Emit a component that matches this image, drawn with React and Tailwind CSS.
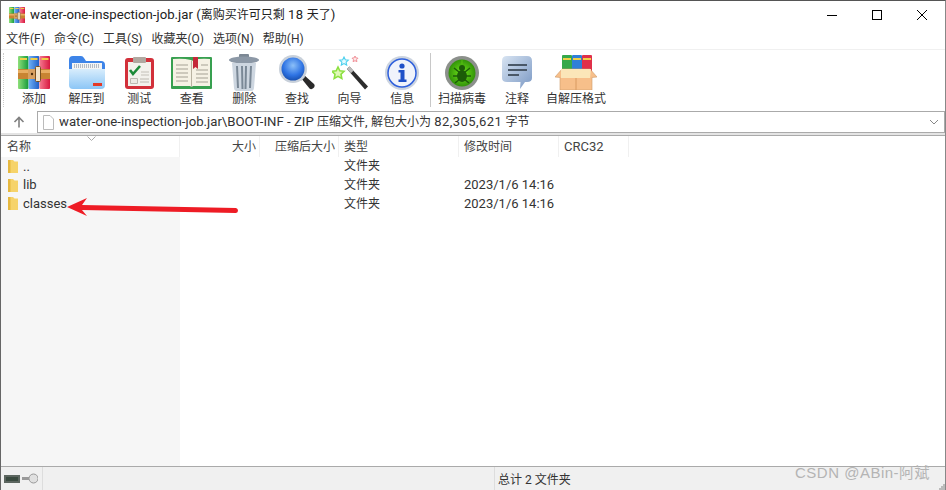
const font = 'font-["Roboto","Noto_Sans_CJK_SC",sans-serif]'

function Cn({ children }) {
  return <span className="text-xs">{children}</span>
}

function Num({ children }) {
  return <span className="text-[13px] tracking-[.45px]">{children}</span>
}

function RarIcon({ size = 32, id = 'a' }) {
  return (
    <svg width={size} height={size * 33 / 32} viewBox="0 0 32 33">
      <defs>
        <linearGradient id={`rg${id}`} x1="0" x2="1" y1="0" y2="0"><stop offset="0" stopColor="#8fe07a" /><stop offset="1" stopColor="#159a3c" /></linearGradient>
        <linearGradient id={`rb${id}`} x1="0" x2="1" y1="0" y2="0"><stop offset="0" stopColor="#6fb0f5" /><stop offset="1" stopColor="#1f5fc8" /></linearGradient>
        <linearGradient id={`rr${id}`} x1="0" x2="1" y1="0" y2="0"><stop offset="0" stopColor="#f57a90" /><stop offset="1" stopColor="#d81840" /></linearGradient>
      </defs>
      <rect x="0" y="0" width="10.500" height="33" rx="1" fill={`url(#rg${id})`} />
      <rect x="10.700" y="0" width="10.500" height="33" rx="1" fill={`url(#rb${id})`} />
      <rect x="21.400" y="0" width="10.600" height="33" rx="1" fill={`url(#rr${id})`} />
      <path d="M2 2h7v2H2zM12.500 2h7v2h-7zM23.500 2h7v2h-7z" fill="#f0d048" />
      <rect x="0" y="13" width="32" height="10" fill="#c88432" />
      <rect x="0" y="14" width="32" height="3" fill="#e8ae62" />
      <rect x="10" y="13" width="11" height="10" fill="#d8a060" />
      <rect x="17.500" y="10.500" width="5" height="15" rx="1" fill="#f3e3c8" stroke="#7a5020" />
      <circle cx="14" cy="18" r="1.200" fill="#4a2c0c" />
    </svg>
  )
}

function ExtractIcon() {
  return (
    <svg width="36" height="33" viewBox="0 0 36 33">
      <defs>
        <linearGradient id="ex" x1="0" x2="0" y1="0" y2="1"><stop offset="0" stopColor="#d8edfc" /><stop offset="1" stopColor="#8cc6f6" /></linearGradient>
      </defs>
      <path d="M0 4q0-4 4-4h8q2 0 3 2l2 3h15q4 0 4 4v6H0z" fill="#3d84e8" />
      <rect x="3" y="7" width="30" height="10" fill="#f4f4f4" />
      <path d="M5 10h26" stroke="#b4bcc6" strokeWidth="4" strokeDasharray="1 1" />
      <path d="M0 13h36v16q0 4-4 4H4q-4 0-4-4z" fill="url(#ex)" />
      <rect x="24" y="27" width="9" height="3" fill="#e53a26" />
    </svg>
  )
}

function TestIcon() {
  return (
    <svg width="29" height="32" viewBox="0 0 29 32">
      <rect x="0" y="1" width="29" height="31" rx="3" fill="#d2303a" />
      <rect x="3" y="5" width="23" height="24" fill="#f3f1ec" />
      <rect x="8" y="0" width="13" height="6" rx="1" fill="#b0a8a0" />
      <path d="M5 13l3 4 7-8" fill="none" stroke="#1c8a38" strokeWidth="2.600" />
      <path d="M16 15h8M16 18h8" stroke="#c4c0b8" />
      <path d="M5.500 21.500h7v5h-7zM15 22h9M15 25h9" fill="#eceae4" stroke="#bcb8b0" />
    </svg>
  )
}

function BookIcon() {
  return (
    <svg width="41" height="32" viewBox="0 0 41 32">
      <rect x="0" y="0" width="41" height="32" rx="1" fill="#38a050" />
      <path d="M2 2q10-1 18 1 1 .5 1 1 1-.5 1-1 8-2 17-1v27H22l-1.500 1-1.500-1H2z" fill="#f5f1e4" />
      <path d="M20.500 4v26" stroke="#b8b2a0" />
      <path d="M5 8h12M5 12h12M5 16h12M5 20h12M5 24h12M25 13h12M25 17h12M25 21h12M25 25h12M30 8h7" stroke="#c0bcae" strokeWidth="1.400" />
      <path d="M22 0h5v12l-2.500-2-2.500 2z" fill="#c4283a" />
    </svg>
  )
}

function TrashIcon() {
  return (
    <svg width="30" height="37" viewBox="0 0 30 37">
      <rect x="10" y="0" width="10" height="4" rx="1" fill="#7c8894" />
      <ellipse cx="15" cy="6" rx="15" ry="3.500" fill="#8c98a6" />
      <path d="M3 9h24l-2 25q-.2 3-3 3H8q-2.800 0-3-3z" fill="#cdd6e0" />
      <path d="M8 12l1 22M13 12l.5 23M17 12l-.5 23M22 12l-1 22" stroke="#7a8896" strokeWidth="2" />
    </svg>
  )
}

function SearchIcon() {
  return (
    <svg width="36" height="35" viewBox="0 0 36 35">
      <defs>
        <radialGradient id="sg" cx=".5" cy=".35" r=".7"><stop offset="0" stopColor="#8cc0f8" /><stop offset=".6" stopColor="#2f74e4" /><stop offset="1" stopColor="#144aa8" /></radialGradient>
      </defs>
      <path d="M22 23l3-3 10 9q1.500 2-.5 4t-4 .5z" fill="#2a2a2a" />
      <path d="M20 24l4-4 2 2-4 4z" fill="#a8aeb4" />
      <circle cx="14" cy="14" r="14" fill="#c8d0da" />
      <circle cx="14" cy="14" r="11.500" fill="url(#sg)" />
    </svg>
  )
}

function WizardIcon() {
  return (
    <svg width="36" height="34" viewBox="0 0 36 34">
      <path d="M6 11l1.800 3.800 4.200.5-3 2.900.8 4.300-3.800-2.100-3.800 2.100.8-4.300-3-2.900 4.200-.5z" fill="#e0f8b8" stroke="#8ce040" strokeWidth="1.600" />
      <path d="M12 1l1.300 2.700 3 .4-2.200 2 .6 3-2.700-1.500L9.300 9.100l.6-3-2.200-2 3-.4z" fill="#e4fbff" stroke="#4cd0ee" strokeWidth="1.100" />
      <path d="M23 0l.9 1.900 2.100.3-1.500 1.500.4 2-1.900-1-1.900 1 .4-2L20 2.200l2.100-.3z" fill="#ffe8e8" stroke="#f09098" strokeWidth="1" />
      <path d="M15 13l2.500-2.500L36 30.500 33 33.500z" fill="#2c2c2c" />
      <path d="M15 13l2.500-2.500 4 4.300-2.600 2.500z" fill="#bcbcbc" />
    </svg>
  )
}

function InfoIcon() {
  return (
    <svg width="34" height="34" viewBox="0 0 34 34">
      <circle cx="17" cy="17" r="17" fill="#ccd4e0" />
      <circle cx="17" cy="17" r="14" fill="#f0f3fb" stroke="#2f60dc" strokeWidth="1.500" />
      <circle cx="17" cy="10" r="2.600" fill="#1f50c8" />
      <path d="M13.500 14h6v9.500h2V26h-8v-2.500h2V16.500h-2z" fill="#1f50c8" />
    </svg>
  )
}

function VirusIcon() {
  return (
    <svg width="34" height="34" viewBox="0 0 34 34">
      <defs>
        <radialGradient id="vg" cx=".5" cy=".5" r=".55"><stop offset="0" stopColor="#70e818" /><stop offset="1" stopColor="#2c8a08" /></radialGradient>
      </defs>
      <circle cx="17" cy="17" r="17" fill="#8c908c" />
      <circle cx="17" cy="17" r="13.500" fill="url(#vg)" />
      <ellipse cx="17" cy="20" rx="5" ry="6" fill="#1c5c08" />
      <circle cx="17" cy="12" r="3" fill="#1c5c08" />
      <path d="M9 12l5 4M25 12l-5 4M8 20h6M26 20h-6M10 27l5-4M24 27l-5-4" stroke="#1c5c08" strokeWidth="1.500" />
      <path d="M17 4v4" stroke="#58c010" />
    </svg>
  )
}

function CommentIcon() {
  return (
    <svg width="30" height="33" viewBox="0 0 30 33">
      <defs>
        <linearGradient id="cm" x1="0" x2="1" y1="0" y2="1"><stop offset="0" stopColor="#d8e4f2" /><stop offset="1" stopColor="#7a98c4" /></linearGradient>
      </defs>
      <path d="M5 0h20q5 0 5 5v17q0 4-5 4h-2l-5 7 .5-7H5q-5 0-5-4V5q0-5 5-5z" fill="url(#cm)" />
      <path d="M6 9h19M6 14h19M6 19h11" stroke="#4a5868" strokeWidth="2" />
    </svg>
  )
}

function SfxIcon() {
  return (
    <svg width="42" height="35" viewBox="0 0 42 35">
      <rect x="7" y="0" width="10" height="18" rx="1" fill="#35a84a" />
      <rect x="17" y="0" width="10" height="18" rx="1" fill="#2f7fd8" />
      <rect x="27" y="0" width="10" height="18" rx="1" fill="#e0304a" />
      <path d="M8 3h8v2H8zM18 3h8v2h-8zM28 3h8v2h-8z" fill="#f0d048" />
      <path d="M7 14h28l7 8-5 .5v12.500H5V22.500L0 22z" fill="#f7bf8a" stroke="#cf9a68" strokeWidth=".6" />
      <path d="M6 14h30l-1 9H6z" fill="#fbe6b8" />
      <path d="M21 23v12" stroke="#d99a60" />
    </svg>
  )
}

const tools = [
  { label: '添加', w: 'w-[52.6px]', icon: <RarIcon /> },
  { label: '解压到', w: 'w-[52.6px]', icon: <ExtractIcon /> },
  { label: '测试', w: 'w-[52.6px]', icon: <TestIcon /> },
  { label: '查看', w: 'w-[52.6px]', icon: <BookIcon /> },
  { label: '删除', w: 'w-[52.6px]', icon: <TrashIcon /> },
  { label: '查找', w: 'w-[52.6px]', icon: <SearchIcon /> },
  { label: '向导', w: 'w-[52.6px]', icon: <WizardIcon /> },
  { label: '信息', w: 'w-[52.6px]', icon: <InfoIcon /> },
]

const tools2 = [
  { label: '扫描病毒', w: 'w-[54px]', icon: <VirusIcon /> },
  { label: '注释', w: 'w-[56px]', icon: <CommentIcon /> },
  { label: '自解压格式', w: 'w-[62px]', icon: <SfxIcon /> },
]

const menus = ['文件(F)', '命令(C)', '工具(S)', '收藏夹(O)', '选项(N)', '帮助(H)']

const rows = [
  { name: '..', type: '文件夹', time: '' },
  { name: 'lib', type: '文件夹', time: '2023/1/6 14:16' },
  { name: 'classes', type: '文件夹', time: '2023/1/6 14:16' },
]

function Tool({ tool }) {
  return (
    <div className={`${tool.w} flex flex-col items-center shrink-0`}>
      <div className="h-[37px] mt-px flex items-center justify-center">{tool.icon}</div>
      <div className="text-xs leading-[17px] whitespace-nowrap text-[#333]">{tool.label}</div>
    </div>
  )
}

function Folder() {
  return (
    <svg width="10" height="13" viewBox="0 0 10 13" className="shrink-0">
      <path d="M0 0h5l1.500 1.500H10V13H0z" fill="#f6d36a" />
      <path d="M0 0h2.500v13H0z" fill="#e6b83e" />
    </svg>
  )
}

export default function App() {
  return (
    <div className={`relative w-[946px] h-[490px] overflow-hidden bg-white flex flex-col border-t border-t-[#555] border-r border-r-[#888] border-l border-l-[#666] text-[#333] text-[13px] ${font}`}>
      {/* 标题栏 */}
      <div className="h-[28px] flex items-center shrink-0 pl-2">
        <RarIcon size={16} id="t" />
        <span className="ml-[5px] text-[13.2px] text-[#222] whitespace-nowrap">water-one-inspection-job.jar (<Cn>离购买许可只剩</Cn> <Num>18</Num> <Cn>天了</Cn>)</span>
        <div className="ml-auto flex items-center text-black">
          <svg width="12" height="12" viewBox="0 0 12 12" className="mr-[33px]"><path d="M1 6.500h10" stroke="#000" /></svg>
          <svg width="12" height="12" viewBox="0 0 12 12" className="mr-[33px]"><rect x="1.500" y="1.500" width="9" height="9" fill="none" stroke="#000" /></svg>
          <svg width="12" height="12" viewBox="0 0 12 12" className="mr-[17px]"><path d="M1 1l10 10M11 1L1 11" stroke="#000" /></svg>
        </div>
      </div>

      {/* 菜单 */}
      <div className="h-[21px] flex items-center shrink-0 pl-[5px] gap-[9px] text-xs text-[#333] border-b border-[#f0f0f0]">
        {menus.map((m) => <span key={m} className="whitespace-nowrap">{m}</span>)}
      </div>

      {/* 工具栏 */}
      <div className="h-[61px] flex items-start shrink-0 pt-[3px]">
        <div className="w-px h-[54px] ml-[2px] mr-[3.700px] shrink-0 border-l border-dotted border-[#ccc]" />
        {tools.map((t) => <Tool key={t.label} tool={t} />)}
        <div className="w-px h-[54px] bg-[#c8c8c8] ml-[2px] mr-[3.500px] shrink-0" />
        {tools2.map((t) => <Tool key={t.label} tool={t} />)}
      </div>

      {/* 地址栏 */}
      <div className="h-[22px] flex items-center shrink-0">
        <div className="w-[36px] flex justify-center">
          <svg width="12" height="12" viewBox="0 0 12 12"><path d="M6 11.500V1.500M1.500 6l4.500-4.500L10.500 6" fill="none" stroke="#808080" strokeWidth="1.600" /></svg>
        </div>
        <div className="flex-1 h-[22px] border border-[#aaa] flex items-center pl-[5px] pr-[5px] bg-white">
          <svg width="11" height="15" viewBox="0 0 11 15" className="shrink-0"><path d="M.5.500h6.500l3.500 3.500v10.500H.5z" fill="#fff" stroke="#bbb" /></svg>
          <span className="ml-[5px] text-[13.2px] text-[#333] whitespace-nowrap">water-one-inspection-job.jar\BOOT-INF - ZIP <Cn>压缩文件</Cn>, <Cn>解包大小为</Cn> <Num>82,305,621</Num> <Cn>字节</Cn></span>
          <svg width="10" height="6" viewBox="0 0 10 6" className="ml-auto"><path d="M1 1l4 4 4-4" fill="none" stroke="#888" /></svg>
        </div>
      </div>
      <div className="h-[3px] shrink-0 bg-[#e4e4e4] border-b border-[#aaa]" />

      {/* 文件列表 */}
      <div className="flex-1 flex min-h-0">
        <div className="w-[179px] shrink-0 flex flex-col">
          <div className="relative h-[21px] flex items-center pl-[6px] text-xs text-[#444] bg-white border-r border-[#f0f0f0]">
            名称
            <svg width="9" height="5" viewBox="0 0 9 5" className="absolute left-[86px] top-0"><path d="M.5.500l4 4 4-4" fill="none" stroke="#aaa" /></svg>
          </div>
          <div className="flex-1 bg-[#f6f6f6] pl-[7px]">
            {rows.map((r) => (
              <div key={r.name} className="h-[18.7px] flex items-center gap-[5px] text-[#333]">
                <Folder />
                <span>{r.name}</span>
              </div>
            ))}
          </div>
        </div>
        <div className="flex-1 flex flex-col">
          <div className="h-[21px] flex text-[#444]">
            <div className="w-[80px] pr-[3px] flex items-center justify-end border-r border-[#f0f0f0] text-xs">大小</div>
            <div className="w-[79px] pr-[3px] flex items-center justify-end border-r border-[#f0f0f0] text-xs whitespace-nowrap">压缩后大小</div>
            <div className="w-[120px] pl-[5px] flex items-center border-r border-[#f0f0f0] text-xs">类型</div>
            <div className="w-[100px] pl-[5px] flex items-center border-r border-[#f0f0f0] text-xs">修改时间</div>
            <div className="w-[70px] pl-[5px] flex items-center border-r border-[#f0f0f0]">CRC32</div>
          </div>
          {rows.map((r) => (
            <div key={r.name} className="h-[18.7px] flex items-center text-[#333]">
              <div className="w-[160px] shrink-0" />
              <div className="w-[120px] shrink-0 pl-1 text-xs">{r.type}</div>
              <div className="pl-[4px]">{r.time}</div>
            </div>
          ))}
        </div>
      </div>

      {/* 状态栏 */}
      <div className="relative h-[24px] shrink-0 bg-[#f0f0f0] border-t border-[#aaa] flex items-center text-xs">
        <div className="w-[42px] h-full border-r border-[#ddd] flex items-center pl-[3px] gap-[2px]">
          <svg width="16" height="8" viewBox="0 0 16 8"><rect width="16" height="8" fill="#5c6660" /><rect x="2" y="2" width="12" height="4" fill="#3a4a40" /></svg>
          <svg width="16" height="11" viewBox="0 0 16 11"><rect y="4" width="9" height="3" fill="#999" /><circle cx="11.500" cy="5.500" r="4.500" fill="#e0e0e0" stroke="#999" /></svg>
        </div>
        <div className="w-[452px] h-full border-r border-[#ddd]" />
        <span className="ml-[3px] pt-[3px] text-[#333]">总计 2 文件夹</span>
        <svg width="6" height="6" viewBox="0 0 6 6" className="absolute right-0 bottom-0">
          <path d="M4 0h2v2H4zM2 2h2v2H2zM4 2h2v2H4zM0 4h2v2H0zM2 4h2v2H2zM4 4h2v2H4z" fill="#bbb" />
        </svg>
      </div>

      {/* 红色箭头 */}
      <svg width="174" height="24" viewBox="0 0 174 24" className="absolute left-[65px] top-[194px]">
        <path d="M1 12L21 3l-5 7 154 3q2 .5 2 2.500t-2 2.500L16 15l5 6z" fill="#ee1c25" />
      </svg>

      {/* 水印 */}
      <span className="absolute left-[794px] top-[461px] text-[15px] tracking-[.5px] text-[#b4b4b4] font-['Liberation_Sans','Noto_Sans_CJK_SC',sans-serif]">CSDN @ABin-阿斌</span>
    </div>
  )
}
